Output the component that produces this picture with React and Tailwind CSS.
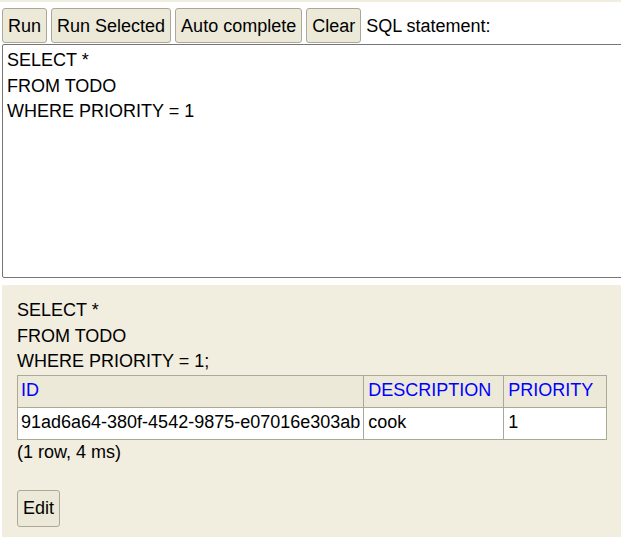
import React from 'react';

const font = "font-['Liberation_Sans',Arial,sans-serif]";

const ToolButton = ({ children, className = '' }) => (
  <button
    className={`h-[35px] px-[5px] bg-[#ece9d8] border border-[#aca899] rounded-[3px] text-[18px] leading-[20px] text-black whitespace-nowrap ${className}`}
  >
    {children}
  </button>
);

const App = () => {
  const rows = [
    { id: '91ad6a64-380f-4542-9875-e07016e303ab', description: 'cook', priority: '1' },
  ];

  return (
    <div className={`w-[621px] h-[537px] overflow-hidden bg-white text-black ${font}`}>
      {/* toolbar */}
      <div className="h-[2px] bg-[#f1eddf]" />
      <div className="flex items-center pl-[2px] pt-[6px] h-[41px]">
        <ToolButton className="px-[4.5px]">Run</ToolButton>
        <ToolButton className="ml-[4px]">Run Selected</ToolButton>
        <ToolButton className="ml-[4px]">Auto complete</ToolButton>
        <ToolButton className="ml-[4px] px-[4px]">Clear</ToolButton>
        <span className="ml-[5px] text-[18px] leading-[20px] whitespace-nowrap">SQL statement:</span>
      </div>

      {/* editor */}
      <div className="pl-[2px] pt-[1px]">
        <textarea
          readOnly
          defaultValue={'SELECT *\nFROM TODO\nWHERE PRIORITY = 1'}
          className={`block w-[660px] h-[234px] resize-none border border-[#767676] rounded-[2px] px-[4px] pt-[3px] text-[18px] leading-[25.5px] text-black outline-none ${font}`}
        />
      </div>

      {/* result */}
      <div className="ml-[2px] mt-[7px] bg-[#f1eddf] pl-[15px] pt-[13px] h-[260px] text-[18px] leading-[25.5px]">
        <div>SELECT *</div>
        <div>FROM TODO</div>
        <div>WHERE PRIORITY = 1;</div>
        <table className="border-collapse">
          <thead>
            <tr className="bg-[#ece9d8] text-[#0000ff] text-left">
              <th className="w-[346px] h-[32px] border border-[#aca899] px-[3px] font-normal">ID</th>
              <th className="w-[140px] h-[32px] border border-[#aca899] px-[4px] font-normal">DESCRIPTION</th>
              <th className="w-[103px] h-[32px] border border-[#aca899] px-[4px] font-normal">PRIORITY</th>
            </tr>
          </thead>
          <tbody>
            {rows.map((row) => (
              <tr key={row.id} className="bg-white">
                <td className="h-[32px] border border-[#aca899] px-[3px] whitespace-nowrap">{row.id}</td>
                <td className="h-[32px] border border-[#aca899] px-[4px]">{row.description}</td>
                <td className="h-[32px] border border-[#aca899] px-[4px]">{row.priority}</td>
              </tr>
            ))}
          </tbody>
        </table>
        <div>(1 row, 4 ms)</div>
        <div className="h-[24.5px]" />
        <ToolButton className="h-[37px]">Edit</ToolButton>
      </div>
    </div>
  );
};

export default App;
